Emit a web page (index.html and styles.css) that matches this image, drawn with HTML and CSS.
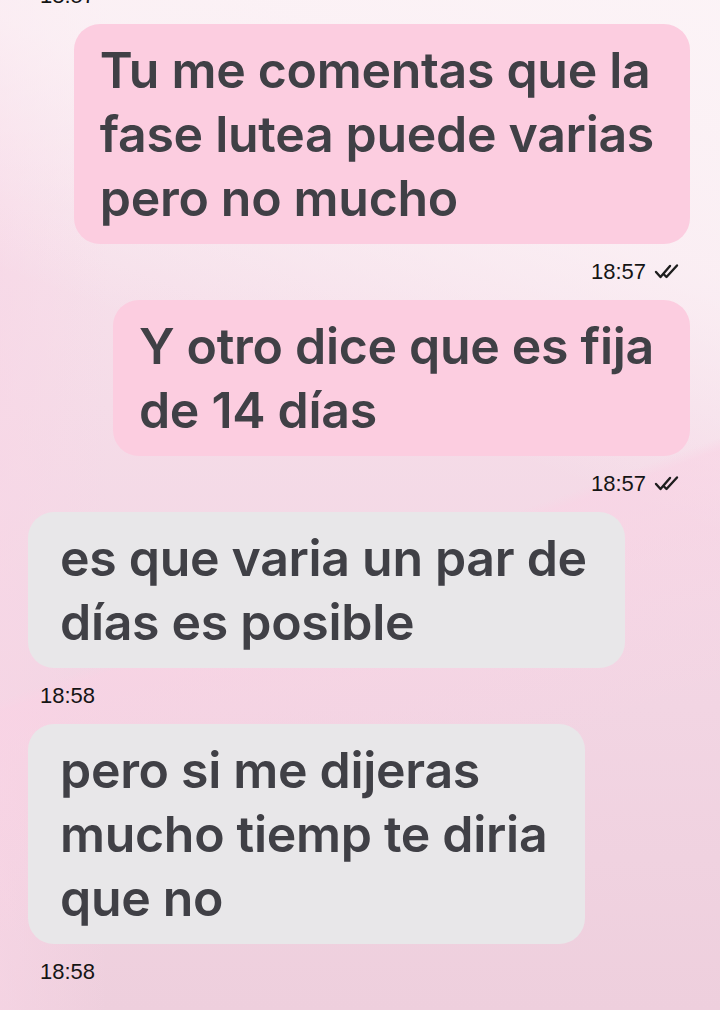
FILE: index.html
```html
<!DOCTYPE html>
<html lang="es">
<head>
<meta charset="utf-8">
<link rel="stylesheet" href="styles.css">
</head>
<body>
<div class="chat">
  <div class="time recv first">18:57</div>

  <div class="msg sent"><div class="bubble sent-b">Tu me comentas que la<br>fase lutea puede varias<br>pero no mucho</div></div>
  <div class="time sent-t">18:57 <svg class="ticks" viewBox="0 0 28 18" width="28" height="18"><path d="M2 9 L6.5 14 L16 3" /><path d="M10 11.5 L12.5 14 L23 2.5" /></svg></div>

  <div class="msg sent"><div class="bubble sent-b">Y otro dice que es fija<br>de 14 días</div></div>
  <div class="time sent-t">18:57 <svg class="ticks" viewBox="0 0 28 18" width="28" height="18"><path d="M2 9 L6.5 14 L16 3" /><path d="M10 11.5 L12.5 14 L23 2.5" /></svg></div>

  <div class="msg recv"><div class="bubble recv-b">es que varia un par de<br>días es posible</div></div>
  <div class="time recv">18:58</div>

  <div class="msg recv"><div class="bubble recv-b">pero si me dijeras<br>mucho tiemp te diria<br>que no</div></div>
  <div class="time recv">18:58</div>
</div>
</body>
</html>
```

FILE: styles.css
```css
html, body {
  margin: 0;
  padding: 0;
}
body {
  width: 720px;
  height: 1010px;
  overflow: hidden;
  background:
    linear-gradient(160deg, rgba(255,255,255,0) 0%, rgba(255,255,255,0) 55%, rgba(250,210,228,0.55) 56%, rgba(250,215,230,0) 75%),
    linear-gradient(200deg, rgba(252,244,247,0.95) 0%, rgba(252,244,247,0.7) 22%, rgba(244,214,228,0) 42%),
    linear-gradient(90deg, rgba(248,214,230,0.6) 0%, rgba(248,214,230,0) 15%),
    linear-gradient(180deg, #f8e6ee 0%, #f5dce8 40%, #f2d5e3 70%, #eecfdd 100%);
  font-family: "Inter", "Liberation Sans", sans-serif;
}
.chat {
  display: flex;
  flex-direction: column;
}
.time {
  height: 56px;
  display: flex;
  align-items: center;
  font-family: "Liberation Sans", Arial, sans-serif;
  font-size: 22px;
  color: #151515;
}
.time.first {
  margin-top: -32px;
}
.time.recv {
  padding-left: 40px;
}
.time.sent-t {
  justify-content: flex-end;
  padding-right: 38px;
  gap: 8px;
}
.ticks {
  fill: none;
  stroke: #1e1e1e;
  stroke-width: 2.4;
  stroke-linecap: round;
  stroke-linejoin: round;
}
.msg {
  display: flex;
}
.msg.sent {
  justify-content: flex-end;
  padding-right: 30px;
}
.msg.recv {
  padding-left: 28px;
}
.bubble {
  font-weight: 600;
  font-size: 50px;
  line-height: 64px;
  color: #404046;
  white-space: nowrap;
  border-radius: 26px;
  padding: 14px 36px 14px 26px;
  letter-spacing: -0.3px;
}
.sent-b {
  background: #fccde0;
}
.sent-b.narrow {
  padding-left: 30px;
}
.recv-b {
  background: #e8e7e9;
  padding-left: 32px;
  padding-right: 38px;
}
```
